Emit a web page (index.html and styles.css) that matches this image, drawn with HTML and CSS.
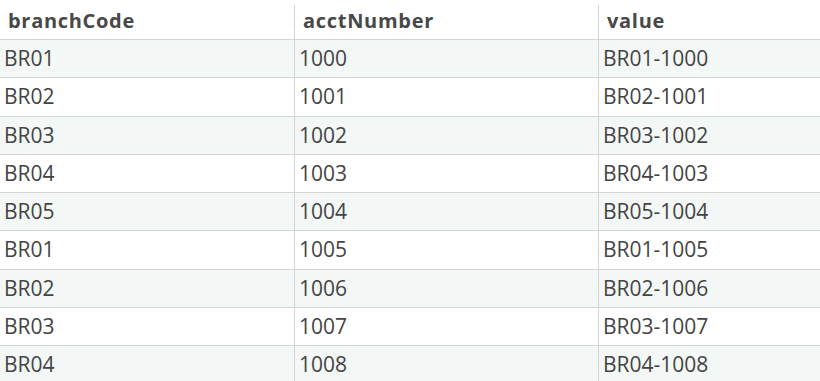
FILE: index.html
```html
<!DOCTYPE html>
<html lang="en">
<head>
    <meta charset="UTF-8">
    <title>Accounts</title>
    <link rel="stylesheet" href="styles.css">
</head>
<body>
    <table class="grid">
        <colgroup>
            <col class="col-branch">
            <col class="col-acct">
            <col>
        </colgroup>
        <thead>
            <tr>
                <th><div class="head">branchCode</div></th>
                <th><div class="head">acctNumber</div></th>
                <th><div class="head">value</div></th>
            </tr>
        </thead>
        <tbody>
            <tr><td>BR01</td><td>1000</td><td>BR01-1000</td></tr>
            <tr><td>BR02</td><td>1001</td><td>BR02-1001</td></tr>
            <tr><td>BR03</td><td>1002</td><td>BR03-1002</td></tr>
            <tr><td>BR04</td><td>1003</td><td>BR04-1003</td></tr>
            <tr><td>BR05</td><td>1004</td><td>BR05-1004</td></tr>
            <tr><td>BR01</td><td>1005</td><td>BR01-1005</td></tr>
            <tr><td>BR02</td><td>1006</td><td>BR02-1006</td></tr>
            <tr><td>BR03</td><td>1007</td><td>BR03-1007</td></tr>
            <tr><td>BR04</td><td>1008</td><td>BR04-1008</td></tr>
        </tbody>
    </table>
</body>
</html>
```

FILE: styles.css
```css
body {
    margin: 0;
    font-family: "Open Sans", sans-serif;
    background: #fff;
    color: #444;
}
.grid {
    width: 820px;
    table-layout: fixed;
    border-collapse: separate;
    border-spacing: 0;
}
.col-branch {
    width: 294px;
}
.col-acct {
    width: 304px;
}
th {
    padding: 5px 0 0;
    text-align: left;
    border-bottom: 1px solid #d4d4d4;
}
.head {
    height: 34px;
    line-height: 31px;
    padding-left: 8px;
    font-size: 20px;
    font-weight: bold;
    letter-spacing: 0.7px;
    color: #484848;
}
th + th .head {
    border-left: 1px solid #d4d4d4;
}
td {
    padding: 4px 4px 4.5px;
    font-size: 21px;
    line-height: 28.75px;
    border-bottom: 1px solid #d4d4d4;
    white-space: nowrap;
}
td + td {
    border-left: 1px solid #d4d4d4;
}
tbody tr:nth-child(odd) {
    background: #f3f7f5;
}
```
